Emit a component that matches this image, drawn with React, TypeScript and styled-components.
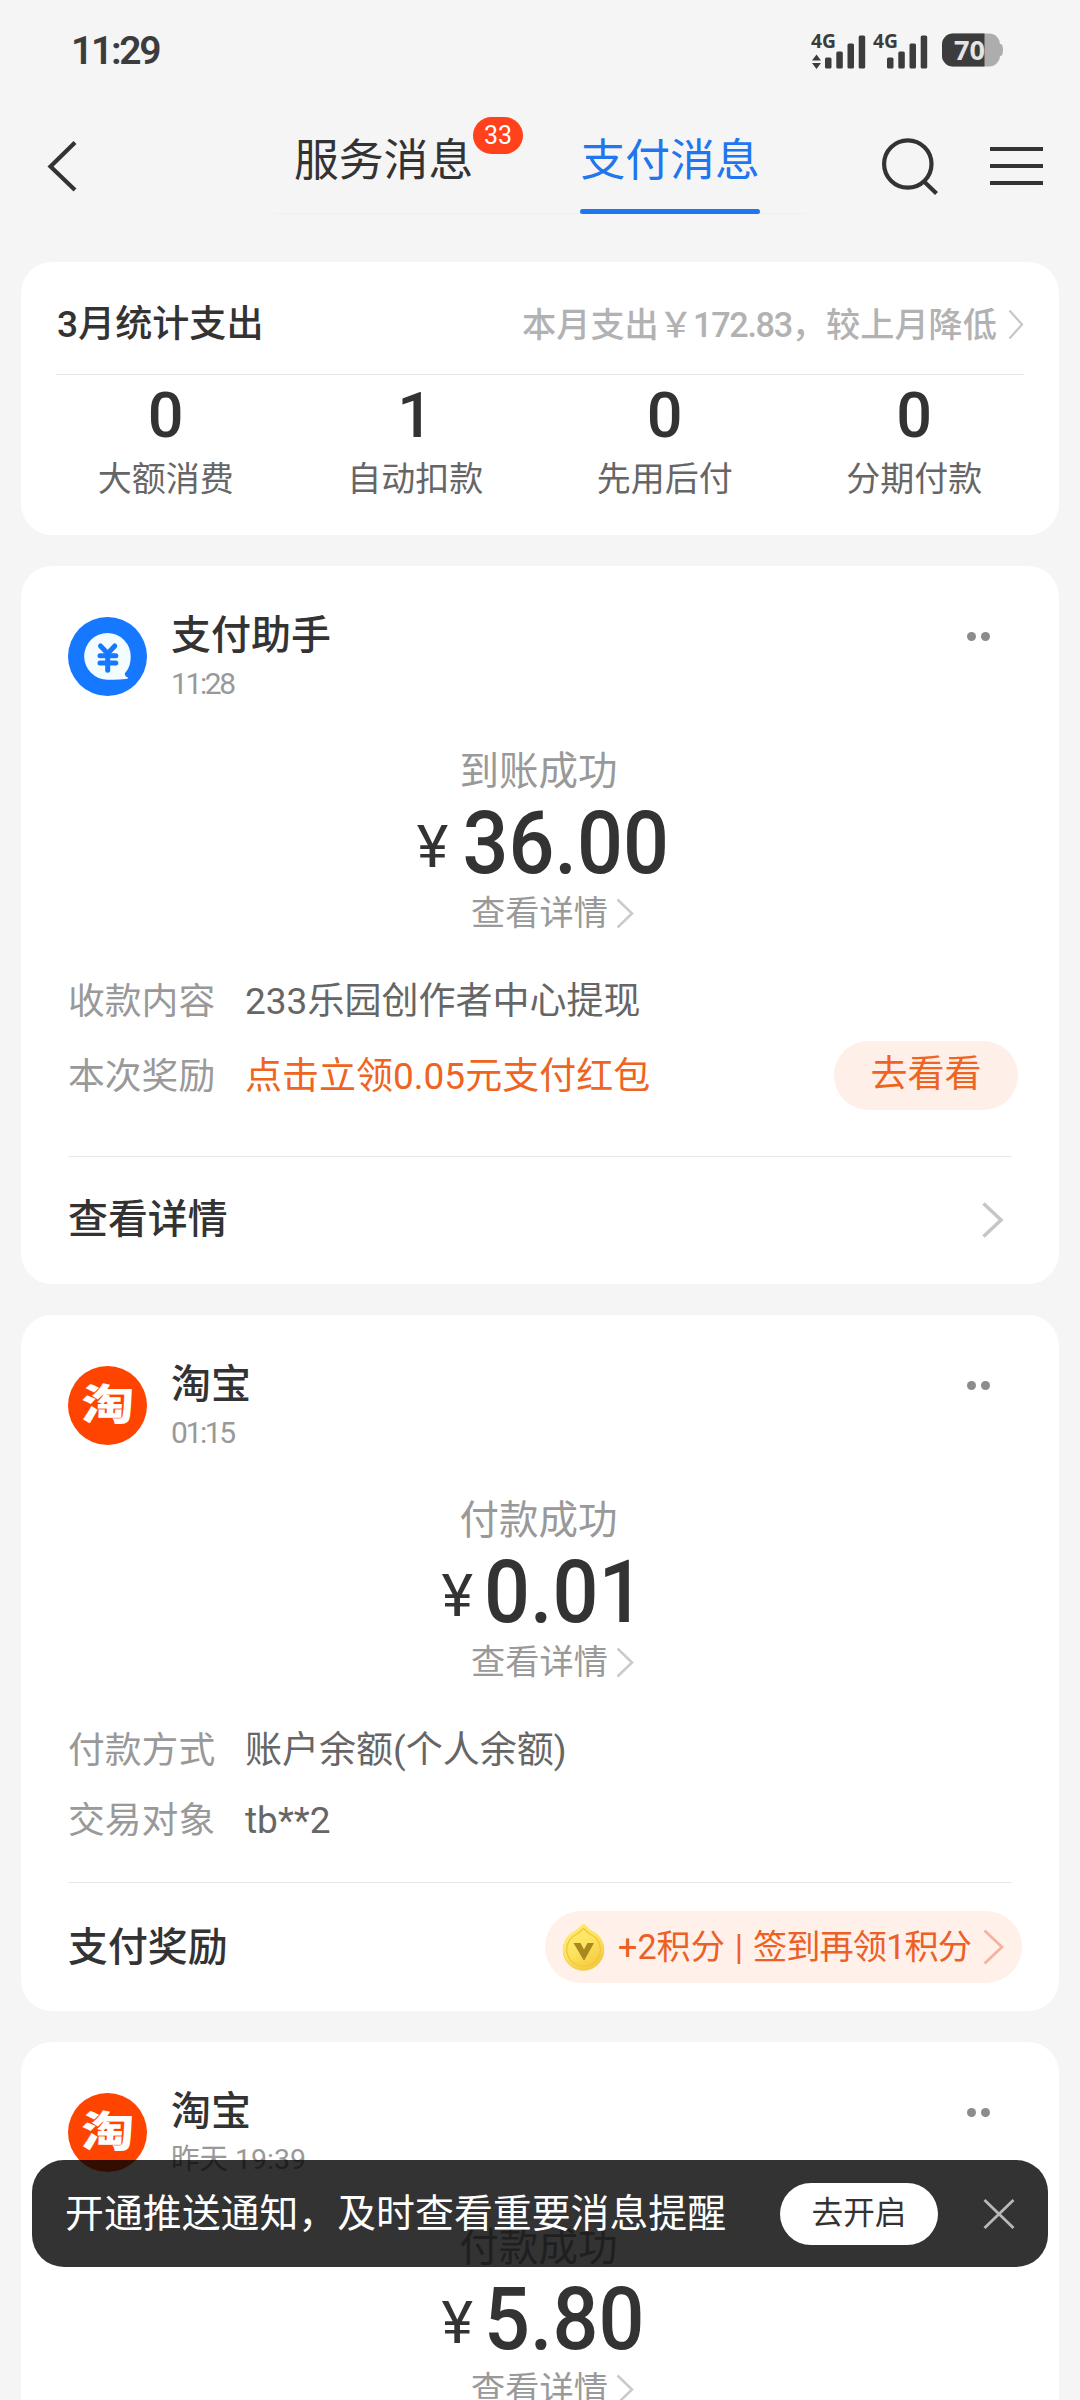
import React from "react";
import styled, { createGlobalStyle } from "styled-components";

const fontStack = `Roboto, "Noto Sans CJK SC", "Noto Sans", sans-serif`;

const GlobalStyle = createGlobalStyle`
  * { box-sizing: border-box; }
  body {
    margin: 0;
    background: #f5f5f5;
    font-family: ${fontStack};
    color: #333;
  }
  svg { display: block; flex: none; overflow: visible; }
`;

const Screen = styled.div`
  position: relative;
  width: 1080px;
  height: 2400px;
  overflow: hidden;
  background: #f5f5f5;
`;

const StatusBar = styled.div`
  display: flex;
  align-items: center;
  justify-content: space-between;
  height: 100px;
  padding: 0 77px 0 71px;
`;

const Clock = styled.div`
  padding-top: 2px;
  font-size: 39px;
  font-weight: 600;
  line-height: 48px;
  letter-spacing: -2.3px;
  color: #3c3c3c;
`;

const StatusIcons = styled.div`
  display: flex;
  align-items: center;
  gap: 7px;
`;

const BatterySlot = styled.div`
  margin-left: 7px;
`;

const Nav = styled.div`
  display: flex;
  height: 114px;
  padding-left: 46px;
`;

const IconButton = styled.div<{ $left: number }>`
  display: flex;
  align-items: center;
  height: 131px;
  margin-left: ${(p) => p.$left}px;
`;

const Tabs = styled.div`
  display: flex;
  gap: 105px;
  width: 530px;
  margin-left: 197px;
  padding: 0 45px 0 20px;
  border-bottom: 1px solid #efefef;
`;

const Tab = styled.div<{ $active?: boolean }>`
  position: relative;
  display: flex;
  flex-direction: column;
  width: 180px;
  height: 114px;
  padding-top: 29px;
  font-size: 44.8px;
  line-height: 64px;
  white-space: nowrap;
  text-indent: ${(p) => (p.$active ? 0.5 : -1)}px;
  color: ${(p) => (p.$active ? "#1f76ee" : "#333")};

  &::after {
    content: "";
    height: 5px;
    margin-top: 16px;
    border-radius: 3px;
    background: ${(p) => (p.$active ? "#1f76ee" : "transparent")};
  }
`;

const Badge = styled.span`
  position: absolute;
  left: 178px;
  top: 17px;
  width: 50px;
  height: 37px;
  border-radius: 19px;
  background: #ff411c;
  color: #fff;
  font-size: 25px;
  line-height: 37px;
  text-align: center;
  text-indent: 0;
`;

const Feed = styled.div`
  display: flex;
  flex-direction: column;
  gap: 31px;
  padding: 48px 21px 0;
`;

const Card = styled.section`
  flex: none;
  border-radius: 31px;
  background: #fff;
`;

const Summary = styled(Card)`
  height: 273px;
  padding: 13px 20px 0;
`;

const SummaryHead = styled.div`
  display: flex;
  align-items: center;
  justify-content: space-between;
  height: 99px;
  margin: 0 15px;
`;

const SummaryTitle = styled.div`
  padding: 1px 0 0 1px;
  font-size: 37.1px;
  font-weight: 500;
  line-height: 44px;
`;

const SummaryLink = styled.div`
  display: flex;
  align-items: center;
  gap: 11px;
  font-size: 34.2px;
  font-weight: 500;
  line-height: 44px;
  color: #b2b2b2;
`;

const Figure = styled.span`
  letter-spacing: -1.3px;
`;

const Rule = styled.div<{ $side: number }>`
  height: 1px;
  margin: 0 ${(p) => p.$side}px;
  background: #e8e8e8;
`;

const Stats = styled.div`
  display: grid;
  grid-template-columns: repeat(4, 1fr);
  padding-top: 9px;
  text-align: center;
`;

const StatValue = styled.div`
  font-size: 63px;
  font-weight: 500;
  line-height: 64px;
`;

const StatLabel = styled.div`
  margin-top: 11px;
  font-size: 34px;
  line-height: 40px;
  color: #666;
`;

const Message = styled(Card)`
  padding: 46px 47px 0;
`;

const MessageHead = styled.div`
  display: flex;
  height: 92px;
`;

const Avatar = styled.div<{ $color: string }>`
  display: flex;
  flex: none;
  align-items: center;
  justify-content: center;
  width: 79px;
  height: 79px;
  margin-top: 5px;
  border-radius: 50%;
  background: ${(p) => p.$color};
  color: #fff;
`;

const TaoMark = styled.span`
  font-size: 43px;
  font-weight: 900;
  line-height: 79px;
  transform: scaleX(1.22) skewX(-2deg);
`;

const Sender = styled.div`
  flex: 1;
  padding-left: 24px;
`;

const SenderName = styled.div`
  font-size: 40px;
  font-weight: 500;
  line-height: 48px;
`;

const SentAt = styled.div<{ $dated: boolean }>`
  margin-top: 4px;
  font-size: ${(p) => (p.$dated ? 28.5 : 30)}px;
  line-height: 40px;
  letter-spacing: ${(p) => (p.$dated ? 0 : -2.4)}px;
  color: #999;
`;

const More = styled.div`
  display: flex;
  gap: 5px;
  margin: 20px 22px 0 0;

  i {
    width: 9px;
    height: 9px;
    border-radius: 50%;
    background: #8c8c8c;
  }
`;

const Result = styled.div`
  display: flex;
  flex-direction: column;
  align-items: center;
  padding-top: 44px;
`;

const ResultLabel = styled.div`
  padding-right: 3px;
  font-size: 39.5px;
  line-height: 48px;
  color: #999;
`;

const Amount = styled.div`
  display: flex;
  align-items: center;
  margin-top: 7px;
  padding-left: 6px;
  font-weight: 500;
  line-height: 80px;
`;

const Currency = styled.span`
  padding-top: 7px;
  font-size: 60px;
  font-weight: 400;
  line-height: 73px;
`;

const AmountValue = styled.span`
  margin-left: -1px;
  font-size: 87px;
  transform: scaleX(0.93);
  transform-origin: 100% 50%;
`;

const DetailLink = styled.div`
  display: flex;
  align-items: center;
  gap: 8px;
  margin: 8px 0 2px;
  padding-left: 25px;
  font-size: 34.2px;
  line-height: 44px;
  color: #999;
`;

const Fields = styled.div<{ $bottom: number }>`
  padding: 30px 0 ${(p) => p.$bottom}px;
`;

const Field = styled.div<{ $height: number }>`
  display: flex;
  align-items: center;
  height: ${(p) => p.$height}px;
  font-size: 36.8px;
  line-height: 50px;
`;

const FieldLabel = styled.div`
  width: 177px;
  color: #999;
`;

const FieldValue = styled.div<{ $hot?: boolean }>`
  flex: 1;
  font-size: 37px;
  color: ${(p) => (p.$hot ? "#ee6420" : "#666")};
`;

const ViewButton = styled.div`
  width: 184px;
  height: 69px;
  margin: 0 -6px 3px 0;
  border-radius: 35px;
  background: #ffefe9;
  color: #ee6420;
  font-size: 37px;
  line-height: 67px;
  text-align: center;
`;

const Footer = styled.div<{ $height: number; $shift?: number }>`
  display: flex;
  align-items: center;
  justify-content: space-between;
  height: ${(p) => p.$height}px;
  padding-bottom: 1px;
  margin-right: ${(p) => p.$shift ?? 9}px;
`;

const FooterTitle = styled.div<{ $drop?: number }>`
  padding-top: ${(p) => p.$drop ?? 0}px;
  font-size: 39.9px;
  font-weight: 500;
  line-height: 48px;
`;

const PointsPill = styled.div`
  display: flex;
  align-items: center;
  width: 477px;
  height: 72px;
  padding-left: 17px;
  border-radius: 36px;
  background: #fff1ea;
  color: #ec6026;
  font-size: 34.2px;
  line-height: 44px;
  white-space: nowrap;
`;

const PointsText = styled.div`
  display: flex;
  align-items: center;
  flex: 1;
  padding-left: 13px;
`;

const PointsBar = styled.span`
  width: 16px;
  margin: 0 6px;
  text-align: center;
`;

const PointsMore = styled.span`
  letter-spacing: -0.9px;
`;

const PointsArrow = styled.div`
  margin-right: 18px;
`;

const Toast = styled.div`
  position: absolute;
  left: 32px;
  top: 2160px;
  display: flex;
  align-items: center;
  width: 1016px;
  height: 107px;
  padding: 0 33px 0 33px;
  border-radius: 32px;
  background: rgba(0, 0, 0, 0.8);
`;

const ToastText = styled.div`
  flex: 1;
  font-size: 38.9px;
  line-height: 56px;
  white-space: nowrap;
  color: #fff;
`;

const ToastButton = styled.div`
  width: 158px;
  height: 62px;
  margin-right: 45px;
  border-radius: 31px;
  background: #fff;
  color: #333;
  font-size: 31.6px;
  line-height: 61px;
  text-align: center;
`;

type ChevronProps = { w: number; h: number; color: string; stroke: number };

const Chevron = ({ w, h, color, stroke }: ChevronProps) => (
  <svg width={w} height={h} viewBox={`0 0 ${w} ${h}`} fill="none">
    <path d={`M1.5 1.5 L${w - 2} ${h / 2} L1.5 ${h - 1.5}`} stroke={color} strokeWidth={stroke} />
  </svg>
);

const Network = ({ arrows }: { arrows?: boolean }) => (
  <svg width="55" height="38" viewBox="0 0 55 38" fill="#3c3c3c">
    <text x="0" y="16.5" fontSize="20" fontWeight="700" fontFamily="Noto Sans" textLength="25" lengthAdjust="spacingAndGlyphs">
      4G
    </text>
    {arrows && <path d="M1 29.5 L5.5 23.5 L10 29.5 Z M1 32 L10 32 L5.5 38 Z" />}
    <rect x="14" y="26.5" width="6.5" height="11" rx="1.5" />
    <rect x="25.3" y="20.5" width="6.5" height="17" rx="1.5" />
    <rect x="36.5" y="12.5" width="6.5" height="25" rx="1.5" />
    <rect x="47.7" y="4.5" width="6.5" height="33" rx="1.5" />
  </svg>
);

const Battery = () => (
  <svg width="61" height="34" viewBox="0 0 61 34">
    <rect x="0" y="0.5" width="58" height="33" rx="11" fill="#adadad" />
    <path d="M57 11 h2 q2 1 2 6 q0 5 -2 6 h-2 z" fill="#adadad" />
    <path d="M11 0.5 H42.5 V33.5 H11 A11 11 0 0 1 0 22.5 V11.5 A11 11 0 0 1 11 0.5 Z" fill="#3c3c3c" />
    <text x="12" y="27" fontSize="27.5" fontWeight="700" fontFamily="Noto Sans" fill="#e4e4e4" textLength="31" lengthAdjust="spacingAndGlyphs">
      70
    </text>
  </svg>
);

const PayLogo = () => (
  <svg width="79" height="79" viewBox="0 0 79 79">
    <path
      d="M39.5 16 A23.2 23.2 0 0 1 62.7 39.5 C62.7 48 60 53 56.8 56.2 C56.5 58.5 58 59.8 60 60.6 C60.4 61.6 59.4 62 58 62.1 C52 62.8 45 63 39.5 62.7 A23.3 23.3 0 0 1 39.5 16 Z"
      fill="#f3fcff"
    />
    <g stroke="#1677ff" strokeWidth="5" strokeLinecap="round" fill="none">
      <path d="M32.5 29 L39.7 36.5 L46.8 29" />
      <path d="M39.7 36.5 V53.3" />
      <path d="M32 38.7 H47.8 M32 46 H47.8" />
    </g>
  </svg>
);

const Coin = () => (
  <svg width="43" height="48" viewBox="0 0 43 48">
    <defs>
      <linearGradient id="coin" x1="0" y1="0" x2="0.6" y2="1">
        <stop offset="0" stopColor="#ffee78" />
        <stop offset="0.6" stopColor="#fde25e" />
        <stop offset="1" stopColor="#f5cb40" />
      </linearGradient>
    </defs>
    <path d="M21.5 1 C24 2 26 6 31 8.5 A20.8 20.8 0 1 1 12 8.5 C17 6 19 2 21.5 1 Z" fill="#f2cf4a" />
    <path d="M21.5 1 C24 2 26 6 31 8.5 A20.5 20 0 1 1 12 8.5 C17 6 19 2 21.5 1 Z" fill="url(#coin)" />
    <path d="M21.5 5.5 C24 8 26 10 29 11.5 A16.8 16.8 0 1 1 14 11.5 C17 10 19 8 21.5 5.5 Z" fill="none" stroke="#f0c640" strokeWidth="1.3" />
    <path d="M11.5 20 H18.5 L22 26.5 L25.5 20 H32 L22.5 37 H21.5 Z" fill="#a8881f" />
  </svg>
);

type FieldData = { name: string; value: string; hot?: boolean; action?: string };

type MessageProps = {
  sender: string;
  time: string;
  dated?: boolean;
  logo: "pay" | "tao";
  status: string;
  amount: string;
  fields?: FieldData[];
  fieldsBottom?: number;
  children?: React.ReactNode;
};

const MessageCard = ({
  sender,
  time,
  dated = false,
  logo,
  status,
  amount,
  fields = [],
  fieldsBottom = 26,
  children,
}: MessageProps) => (
  <Message>
    <MessageHead>
      <Avatar $color={logo === "pay" ? "#1677ff" : "#ff4400"}>
        {logo === "pay" ? <PayLogo /> : <TaoMark>淘</TaoMark>}
      </Avatar>
      <Sender>
        <SenderName>{sender}</SenderName>
        <SentAt $dated={dated}>{time}</SentAt>
      </Sender>
      <More>
        <i />
        <i />
      </More>
    </MessageHead>
    <Result>
      <ResultLabel>{status}</ResultLabel>
      <Amount>
        <Currency>¥</Currency>
        <AmountValue>{amount}</AmountValue>
      </Amount>
      <DetailLink>
        查看详情
        <Chevron w={18} h={31} color="#cacaca" stroke={2.5} />
      </DetailLink>
    </Result>
    <Fields $bottom={fieldsBottom}>
      {fields.map((f) => (
        <Field key={f.name} $height={f.action ? 80 : 70}>
          <FieldLabel>{f.name}</FieldLabel>
          <FieldValue $hot={f.hot}>{f.value}</FieldValue>
          {f.action && <ViewButton>{f.action}</ViewButton>}
        </Field>
      ))}
    </Fields>
    {children}
  </Message>
);

const stats = [
  { value: "0", label: "大额消费" },
  { value: "1", label: "自动扣款" },
  { value: "0", label: "先用后付" },
  { value: "0", label: "分期付款" },
];

export default function App() {
  return (
    <Screen>
      <GlobalStyle />
      <StatusBar>
        <Clock>11:29</Clock>
        <StatusIcons>
          <Network arrows />
          <Network />
          <BatterySlot>
            <Battery />
          </BatterySlot>
        </StatusIcons>
      </StatusBar>

      <Nav>
        <IconButton $left={0}>
          <svg width="32" height="50" viewBox="0 0 32 50" fill="none">
            <path d="M29 1.5 L4.5 25.5 L29 49" stroke="#333" strokeWidth="4.2" />
          </svg>
        </IconButton>
        <Tabs>
          <Tab>
            服务消息
            <Badge>33</Badge>
          </Tab>
          <Tab $active>支付消息</Tab>
        </Tabs>
        <IconButton $left={75}>
          <svg width="60" height="60" viewBox="0 0 60 60" fill="none" stroke="#333" strokeWidth="4.2">
            <circle cx="27.8" cy="28" r="23.7" />
            <path d="M43.5 45 L56.5 57.5" />
          </svg>
        </IconButton>
        <IconButton $left={50}>
          <svg width="53" height="40" viewBox="0 0 53 40" stroke="#333" strokeWidth="4">
            <path d="M0 3 H53 M0 20 H53 M0 37 H53" />
          </svg>
        </IconButton>
      </Nav>

      <Feed>
        <Summary>
          <SummaryHead>
            <SummaryTitle>3月统计支出</SummaryTitle>
            <SummaryLink>
              <span>
                本月支出￥<Figure>172.83</Figure>，较上月降低
              </span>
              <Chevron w={16} h={31} color="#c8c8c8" stroke={2.3} />
            </SummaryLink>
          </SummaryHead>
          <Rule $side={15} />
          <Stats>
            {stats.map((s) => (
              <div key={s.label}>
                <StatValue>{s.value}</StatValue>
                <StatLabel>{s.label}</StatLabel>
              </div>
            ))}
          </Stats>
        </Summary>

        <MessageCard
          sender="支付助手"
          time="11:28"
          logo="pay"
          status="到账成功"
          amount="36.00"
          fieldsBottom={39}
          fields={[
            { name: "收款内容", value: "233乐园创作者中心提现" },
            { name: "本次奖励", value: "点击立领0.05元支付红包", hot: true, action: "去看看" },
          ]}
        >
          <Rule $side={0} />
          <Footer $height={127}>
            <FooterTitle>查看详情</FooterTitle>
            <Chevron w={21} h={36} color="#c6c6c6" stroke={3.6} />
          </Footer>
        </MessageCard>

        <MessageCard
          sender="淘宝"
          time="01:15"
          logo="tao"
          status="付款成功"
          amount="0.01"
          fields={[
            { name: "付款方式", value: "账户余额(个人余额)" },
            { name: "交易对象", value: "tb**2" },
          ]}
        >
          <Rule $side={0} />
          <Footer $height={128} $shift={-10}>
            <FooterTitle $drop={3}>支付奖励</FooterTitle>
            <PointsPill>
              <Coin />
              <PointsText>
                +2积分<PointsBar>|</PointsBar>
                <PointsMore>签到再领1积分</PointsMore>
              </PointsText>
              <PointsArrow>
                <Chevron w={21} h={36} color="#f3b49e" stroke={2.8} />
              </PointsArrow>
            </PointsPill>
          </Footer>
        </MessageCard>

        <MessageCard sender="淘宝" time="昨天 19:39" dated logo="tao" status="付款成功" amount="5.80" />
      </Feed>

      <Toast>
        <ToastText>开通推送通知，及时查看重要消息提醒</ToastText>
        <ToastButton>去开启</ToastButton>
        <svg width="32" height="30" viewBox="0 0 32 30" stroke="#b8b8b8" strokeWidth="2.8">
          <path d="M1.5 1 L30.5 29 M30.5 1 L1.5 29" />
        </svg>
      </Toast>
    </Screen>
  );
}
